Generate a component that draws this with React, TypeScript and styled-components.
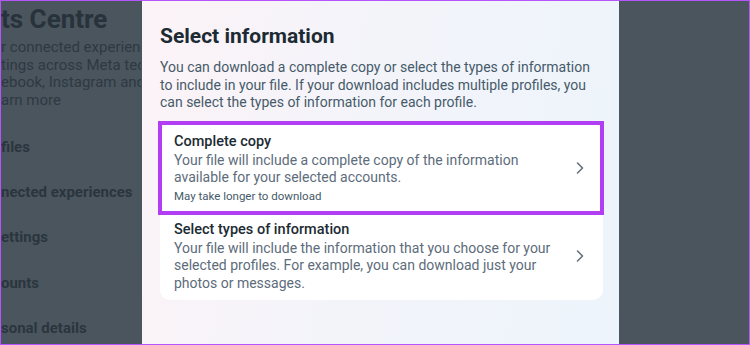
import styled, { createGlobalStyle } from 'styled-components';

const GlobalStyle = createGlobalStyle`
  html, body {
    margin: 0;
    padding: 0;
    background: #4a555e;
  }
  * {
    box-sizing: border-box;
  }
`;

const Screen = styled.div`
  position: relative;
  width: 750px;
  height: 345px;
  overflow: hidden;
  border: 1px solid #b655fb;
  background: #4a555e;
  font-family: Roboto, "Noto Sans", sans-serif;
`;

const BackPage = styled.div`
  width: 140px;
  overflow: hidden;
  display: flex;
  flex-direction: column;
  padding: 2px 0 0 0;
  color: #29343d;
  white-space: nowrap;
`;

const BackTitle = styled.div`
  font-size: 26px;
  font-weight: 700;
  line-height: 32px;
  color: #27323b;
  margin-bottom: 4px;
`;

const BackLine = styled.div`
  font-size: 15px;
  line-height: 17.5px;
  color: #2e3943;
`;

const BackMenu = styled.div`
  display: flex;
  flex-direction: column;
  margin-top: 15px;
`;

const BackItem = styled.div`
  height: 45.3px;
  display: flex;
  align-items: center;
  font-size: 15px;
  font-weight: 700;
  color: #2a353e;
`;

const Overlay = styled.div`
  position: absolute;
  inset: 0;
  display: flex;
  padding-left: 141px;
`;

const Modal = styled.div`
  width: 477px;
  height: 100%;
  padding: 21px 16px 0 18px;
  background: linear-gradient(100deg, #fcf3f7 0%, #f3f4fa 45%, #edf4fb 100%);
`;

const Title = styled.h2`
  margin: 0;
  font-size: 21px;
  line-height: 28px;
  font-weight: 700;
  color: #1c2b33;
`;

const Intro = styled.p`
  margin: 9px 0 0 0;
  font-size: 14px;
  line-height: 17.5px;
  color: #465a69;
`;

const Card = styled.div`
  margin-top: 12px;
  background: #ffffff;
  border-radius: 10px;
  display: flex;
  flex-direction: column;
`;

const Option = styled.div<{ highlighted?: boolean }>`
  position: relative;
  display: flex;
  align-items: center;
  gap: 12px;
  padding: ${p => (p.highlighted ? '9px 19px 10px 14px' : '7px 19px 8px 14px')};
  cursor: pointer;
  ${p =>
    p.highlighted &&
    `
    &::after {
      content: '';
      position: absolute;
      inset: -3px -1px -1px -2px;
      border: 4px solid #b13ef2;
      pointer-events: none;
    }
  `}
`;

const OptionText = styled.div`
  flex: 1;
  display: flex;
  flex-direction: column;
`;

const OptionTitle = styled.div`
  font-size: 14.5px;
  line-height: 18px;
  font-weight: 500;
  color: #1c2b33;
  margin-bottom: 1px;
`;

const OptionDesc = styled.div`
  font-size: 14px;
  line-height: 17.5px;
  color: #5d6c7b;
`;

const OptionNote = styled.div`
  font-size: 11.5px;
  line-height: 16px;
  color: #465a69;
  margin-top: 1px;
`;

const Chevron = () => (
  <svg width="8" height="12" viewBox="0 0 8 12" fill="none">
    <path d="M1.5 1 L6.5 6 L1.5 11" stroke="#5d6c7b" strokeWidth="1.5" strokeLinecap="round" strokeLinejoin="round" />
  </svg>
);

const menu = ['files', 'nected experiences', 'ettings', 'ounts', 'sonal details'];

function App() {
  return (
    <>
      <GlobalStyle />
      <Screen>
        <BackPage>
          <BackTitle>ts Centre</BackTitle>
          <BackLine>r connected experienc</BackLine>
          <BackLine>tings across Meta tech</BackLine>
          <BackLine>ebook, Instagram and M</BackLine>
          <BackLine>arn more</BackLine>
          <BackMenu>
            {menu.map(item => (
              <BackItem key={item}>{item}</BackItem>
            ))}
          </BackMenu>
        </BackPage>

        <Overlay>
          <Modal>
            <Title>Select information</Title>
            <Intro>
              You can download a complete copy or select the types of information to include in your file. If your
              download includes multiple profiles, you can select the types of information for each profile.
            </Intro>
            <Card>
              <Option highlighted>
                <OptionText>
                  <OptionTitle>Complete copy</OptionTitle>
                  <OptionDesc>
                    Your file will include a complete copy of the information available for your selected accounts.
                  </OptionDesc>
                  <OptionNote>May take longer to download</OptionNote>
                </OptionText>
                <Chevron />
              </Option>
              <Option>
                <OptionText>
                  <OptionTitle>Select types of information</OptionTitle>
                  <OptionDesc>
                    Your file will include the information that you choose for your selected profiles. For example, you
                    can download just your photos or messages.
                  </OptionDesc>
                </OptionText>
                <Chevron />
              </Option>
            </Card>
          </Modal>
        </Overlay>
      </Screen>
    </>
  );
}

export default App;
